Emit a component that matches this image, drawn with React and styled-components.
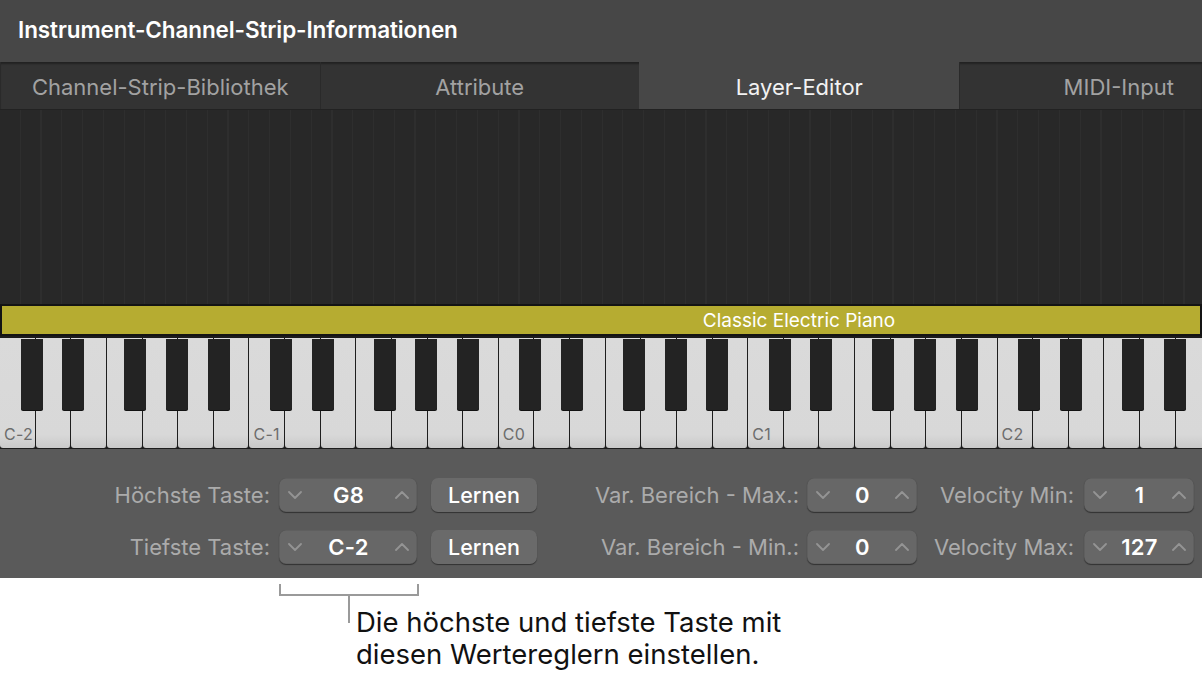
import React from 'react';
import styled, { createGlobalStyle } from 'styled-components';

const OCTAVE = 249.4;
const WHITE = OCTAVE / 7;
const SEMI = OCTAVE / 12;

const GlobalStyle = createGlobalStyle`
  html, body {
    margin: 0;
    padding: 0;
    background: #ffffff;
  }
  body {
    font-family: Inter, "Open Sans", Arial, sans-serif;
    -webkit-font-smoothing: antialiased;
  }
`;

const Page = styled.div`
  width: 1202px;
  height: 681px;
  overflow: hidden;
  display: flex;
  flex-direction: column;
  background: #fff;
`;

const TitleBar = styled.div`
  height: 62px;
  display: flex;
  align-items: center;
  padding-left: 18px;
  padding-bottom: 3px;
  box-sizing: border-box;
  background: #474747;
  color: #fff;
  font-size: 22.5px;
  font-weight: 600;
  letter-spacing: -0.1px;
`;

const TabBar = styled.div`
  height: 48px;
  display: grid;
  grid-template-columns: repeat(4, 319.5px);
  background: #333;
  box-shadow: inset 0 2px 2px rgba(0, 0, 0, 0.35);
  border-bottom: 1px solid #222;
  box-sizing: border-box;
  overflow: hidden;
`;

const Tab = styled.div`
  display: flex;
  align-items: center;
  justify-content: center;
  font-size: 22px;
  color: ${p => (p.$active ? '#f2f2f2' : '#a2a2a2')};
  background: ${p => (p.$active ? '#474747' : 'transparent')};
  border-left: 1px solid ${p => (p.$active ? '#474747' : '#2a2a2a')};
  padding-top: 2px;
`;

const LayerArea = styled.div`
  height: 194px;
  background-color: #282828;
  background-image: repeating-linear-gradient(
    90deg,
    transparent 0,
    transparent ${SEMI - 1.2}px,
    #2e2e2e ${SEMI - 1.2}px,
    #2e2e2e ${SEMI}px
  );
`;

const LayerBar = styled.div`
  height: 32px;
  box-sizing: border-box;
  border: 2px solid #141414;
  background: #b6ac31;
  color: #fff;
  font-size: 19px;
  display: flex;
  align-items: center;
  justify-content: center;
  padding-left: 396px;
`;

const Keyboard = styled.div`
  height: 113px;
  box-sizing: border-box;
  padding-top: 2px;
  background: #1c1c1c;
  display: flex;
  overflow: hidden;
`;

const Octave = styled.div`
  position: relative;
  flex: 0 0 ${OCTAVE}px;
  height: 110px;
  display: flex;
`;

const WhiteKey = styled.div`
  flex: 0 0 ${WHITE}px;
  box-sizing: border-box;
  height: 110px;
  background: linear-gradient(#dadada 0, #d8d8d8 88%, #c9c9c9 100%);
  border-right: 1.5px solid #1e1e1e;
  border-radius: 0 0 3px 3px;
  display: flex;
  align-items: flex-end;
  padding: 0 0 4px 4px;
  font-size: 16px;
  color: #6c6c6c;
  letter-spacing: 0.3px;
  white-space: nowrap;
`;

const BlackKey = styled.div`
  position: absolute;
  top: 1px;
  width: 22px;
  height: 71px;
  background: #232323;
  border-radius: 0 0 2px 2px;
  box-shadow: 0 1px 0 #111;
`;

const Controls = styled.div`
  height: 129px;
  box-sizing: border-box;
  background: #5a5a5a;
  padding-top: 29px;
  display: grid;
  grid-template-columns: 279px 138px 120px 270px 110px 167px 110px;
  grid-auto-rows: 34px;
  row-gap: 18px;
`;

const Label = styled.div`
  display: flex;
  align-items: center;
  justify-content: flex-end;
  padding-right: ${p => p.$pad}px;
  color: #ababab;
  font-size: 22px;
  white-space: nowrap;
`;

const Stepper = styled.div`
  display: flex;
  align-items: center;
  justify-content: space-between;
  padding: 0 8px 0 9px;
  box-sizing: border-box;
  background: #676767;
  border-radius: 7px;
  box-shadow: 0 1px 1px rgba(0, 0, 0, 0.45), inset 0 0 0 0.5px rgba(0, 0, 0, 0.15);
`;

const Value = styled.span`
  color: #fff;
  font-size: 22px;
  font-weight: 600;
  letter-spacing: 0.3px;
`;

const LearnButton = styled.button`
  justify-self: end;
  width: 106px;
  height: 34px;
  border: none;
  border-radius: 7px;
  background: #6a6a6a;
  box-shadow: 0 1px 1px rgba(0, 0, 0, 0.45);
  color: #fff;
  font-family: inherit;
  font-size: 21.5px;
  font-weight: 500;
  padding: 0 0 1px;
`;

const Callout = styled.div`
  display: grid;
  padding: 6px 0 0 279px;
  & > * {
    grid-area: 1 / 1;
  }
`;

const CalloutText = styled.p`
  margin: 0;
  padding: 22px 0 0 77px;
  font-size: 27.5px;
  line-height: 32px;
  color: #111;
`;

const Chevron = ({ up }) => (
  <svg width="14" height="8" viewBox="0 0 14 8">
    <path
      d={up ? 'M1 7 L7 1 L13 7' : 'M1 1 L7 7 L13 1'}
      fill="none"
      stroke="#949494"
      strokeWidth="1.8"
      strokeLinecap="round"
      strokeLinejoin="round"
    />
  </svg>
);

const ValueStepper = ({ value }) => (
  <Stepper>
    <Chevron />
    <Value>{value}</Value>
    <Chevron up />
  </Stepper>
);

const blackOffsets = [20.7, 62.3, 124.3, 166, 207.7];

const KeyboardOctave = ({ name }) => (
  <Octave>
    {[0, 1, 2, 3, 4, 5, 6].map(i => (
      <WhiteKey key={i}>{i === 0 ? name : ''}</WhiteKey>
    ))}
    {blackOffsets.map(x => (
      <BlackKey key={x} style={{ left: x }} />
    ))}
  </Octave>
);

const tabs = ['Channel-Strip-Bibliothek', 'Attribute', 'Layer-Editor', 'MIDI-Input'];

export default function App() {
  return (
    <Page>
      <GlobalStyle />
      <TitleBar>Instrument-Channel-Strip-Informationen</TitleBar>
      <TabBar>
        {tabs.map(t => (
          <Tab key={t} $active={t === 'Layer-Editor'}>
            {t}
          </Tab>
        ))}
      </TabBar>
      <LayerArea />
      <LayerBar>Classic Electric Piano</LayerBar>
      <Keyboard>
        {['C-2', 'C-1', 'C0', 'C1', 'C2'].map(n => (
          <KeyboardOctave key={n} name={n} />
        ))}
      </Keyboard>
      <Controls>
        <Label $pad={9}>Höchste Taste:</Label>
        <ValueStepper value="G8" />
        <LearnButton>Lernen</LearnButton>
        <Label $pad={8}>Var. Bereich - Max.:</Label>
        <ValueStepper value="0" />
        <Label $pad={10}>Velocity Min:</Label>
        <ValueStepper value="1" />

        <Label $pad={9}>Tiefste Taste:</Label>
        <ValueStepper value="C-2" />
        <LearnButton>Lernen</LearnButton>
        <Label $pad={8}>Var. Bereich - Min.:</Label>
        <ValueStepper value="0" />
        <Label $pad={10}>Velocity Max:</Label>
        <ValueStepper value="127" />
      </Controls>
      <Callout>
        <svg width="140" height="40" viewBox="0 0 140 40">
          <path
            d="M1 0 V11 H139 V0 M70 11 V39"
            fill="none"
            stroke="#9a9a9a"
            strokeWidth="2"
          />
        </svg>
        <CalloutText>
          Die höchste und tiefste Taste mit
          <br />
          diesen Wertereglern einstellen.
        </CalloutText>
      </Callout>
    </Page>
  );
}
